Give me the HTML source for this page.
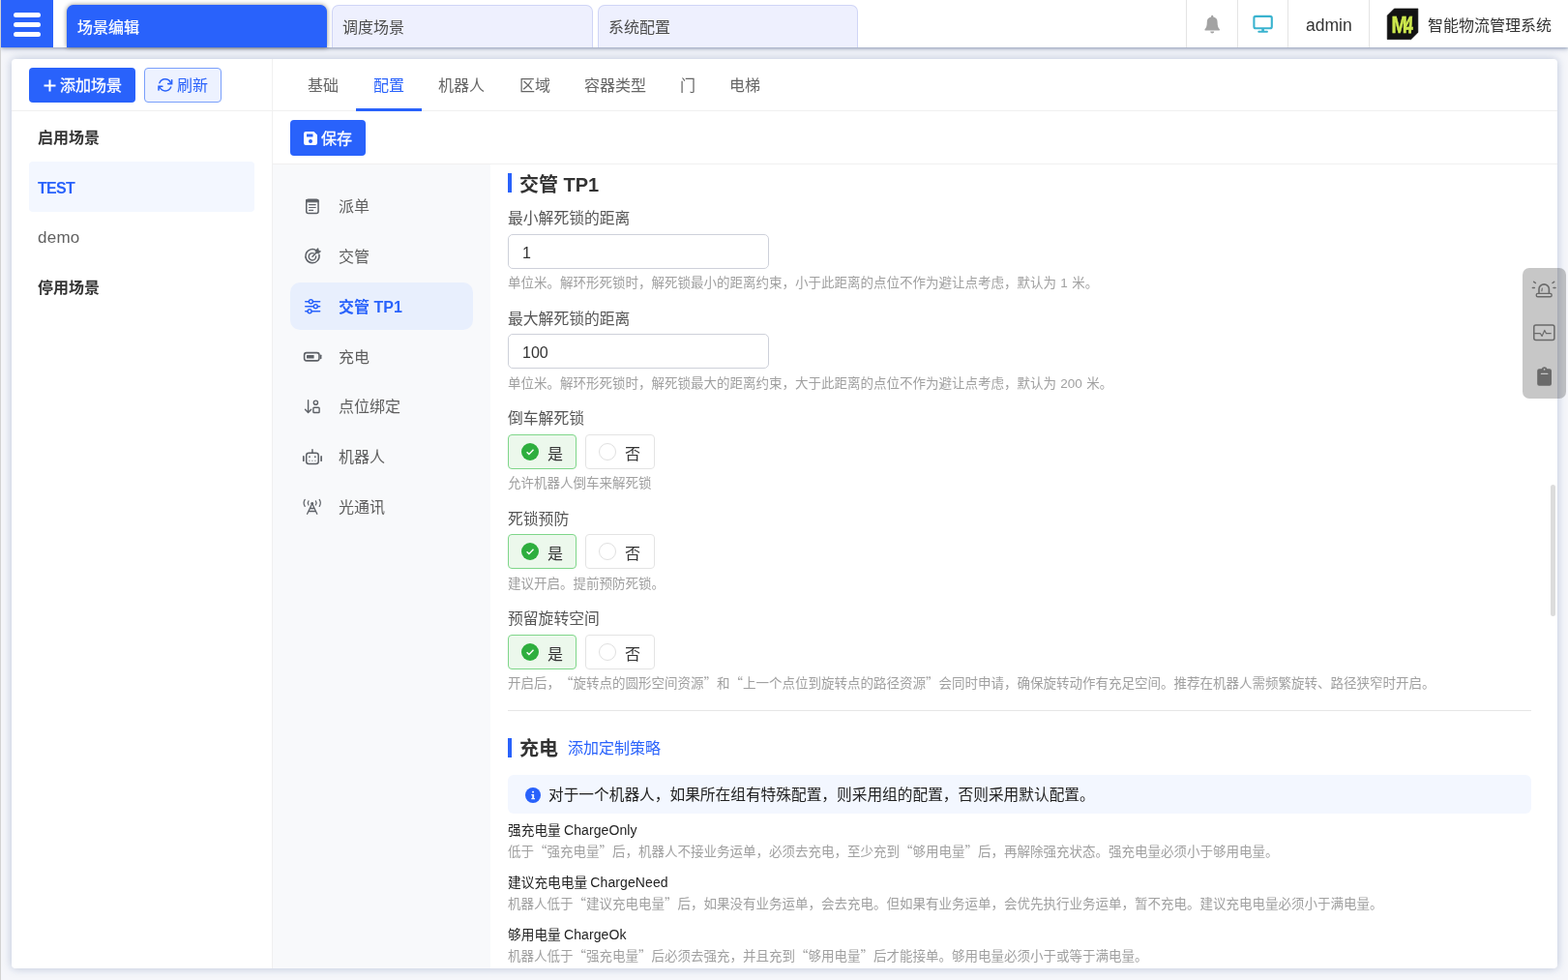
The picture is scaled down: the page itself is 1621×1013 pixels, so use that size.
<!DOCTYPE html>
<html lang="zh-CN">
<head>
<meta charset="utf-8">
<title>智能物流管理系统</title>
<style>
*{box-sizing:border-box;margin:0;padding:0}
html,body{width:1621px;height:1013px;overflow:hidden}
body{position:relative;background:#f5f6fa;font-family:"Liberation Sans","Noto Sans CJK SC",sans-serif;font-size:16px;color:#333;line-height:1;text-spacing-trim:space-all}
.abs{position:absolute}
.t{position:absolute;white-space:nowrap;line-height:24px;height:24px}
.b{font-weight:bold}
svg{position:absolute;overflow:visible}
#edge{left:0;top:0;width:1px;height:1013px;background:#d2d2d2}
#hdr{left:1px;top:0;width:1620px;height:49px;background:#fff;box-shadow:0 1px 3px rgba(50,75,115,.42),0 2px 6px rgba(80,105,150,.25)}
#burger{left:0;top:0;width:54px;height:49px;background:#2962fb}
#burger i{position:absolute;left:13px;width:28px;height:5px;border-radius:2.5px;background:#fff}
.tab{position:absolute;top:5px;height:44px;width:270px;border-radius:7px 7px 0 0;background:#eef0fe;border:1px solid #d0d5f6;border-bottom:none;color:#4c4c4c;font-size:16px;line-height:45px;padding-left:10px}
.tab.on{background:#2962fb;border-color:#2962fb;color:#fff;-webkit-text-stroke:.25px #fff;box-shadow:0 0 5px rgba(0,0,0,.45)}
.vsep{position:absolute;top:0;width:1px;height:49px;background:#e4e4e4}
#card{left:12px;top:61px;width:1598px;height:940px;background:#fff;border-radius:4px;box-shadow:0 0 10px rgba(88,112,160,.38)}
.btn{position:absolute;height:36px;border-radius:4px;background:#2962fb;color:#fff}
.btn.ol{background:#edf2ff;border:1px solid #7aa0fb;color:#2962fb}
.hl{position:absolute;height:1px;background:#f0f0f0}
.vl{position:absolute;width:1px;background:#f0f0f0}
.nav{color:#666}
.sub{color:#5e5e5e}
.lab{color:#555;font-size:15.8px}
.hint{color:#a0a0a0;font-size:13.5px;word-spacing:.6px}
.c14{color:#222;font-size:13.7px}
.la{font-size:14px;letter-spacing:.1px;margin-left:-.6px}
.inp{position:absolute;left:525px;width:270px;height:36px;border:1px solid #ced1da;border-radius:5px;background:#fff}
.rb{position:absolute;width:71px;height:36px;border:1px solid #e3e3e3;border-radius:4px;background:#fff}
.rb.on{border-color:#7fd68a;background:#ecf8ec}
.rb .dot{position:absolute;left:13px;top:8px;width:18px;height:18px;border-radius:50%;border:1px solid #e0e0e0;background:#fff}
.rb.on .dot{border:none;background:#2eae3e}
.rb .tx{position:absolute;left:40px;top:8px;line-height:24px;color:#333;font-size:16px}
.q{font-family:"Noto Sans CJK SC","Liberation Sans",sans-serif}
.bar{position:absolute;left:525px;width:4px;height:20px;background:#2962fb}
</style>
</head>
<body>
<div id="all" style="position:absolute;left:0;top:0;width:1621px;height:1013px;will-change:transform">
<div id="card" class="abs"></div>
<div class="btn" style="left:30px;top:70px;width:110px"></div>
<svg style="left:45px;top:82px" width="13" height="13" viewBox="0 0 13 13"><path d="M6.5 0.5v12M0.5 6.5h12" stroke="#fff" stroke-width="2" fill="none"/></svg>
<div class="t " style="left:62px;top:77px;color:#fff;-webkit-text-stroke:.3px #fff">添加场景</div>
<div class="btn ol" style="left:149px;top:70px;width:80px"></div>
<svg style="left:160px;top:78px" width="22" height="20" viewBox="160 78 22 20" fill="none" stroke="#2962fb" stroke-width="1.500" stroke-linecap="round" stroke-linejoin="round"><path d="M164.900 85.700A6.300 6.300 0 0 1 176.400 85.400"/><path d="M176.700 90A6.300 6.300 0 0 1 165.200 90.300"/><path d="M177.600 82.700v3.900h-3.900M164 93.100v-3.900h3.900" stroke-width="1.600" stroke-linejoin="miter"/></svg>
<div class="t " style="left:183px;top:77px;color:#2962fb">刷新</div>
<div class="hl" style="left:12px;top:114px;width:1598px"></div>
<div class="vl" style="left:281px;top:61px;height:940px"></div>
<div class="t b" style="left:39px;top:131px;color:#333">启用场景</div>
<div class="abs" style="left:30px;top:167px;width:233px;height:52px;border-radius:4px;background:#f3f7ff"></div>
<div class="t b" style="left:39px;top:183px;color:#2962fb;letter-spacing:-.7px">TEST</div>
<div class="t " style="left:39px;top:234px;color:#616161;font-size:17px;letter-spacing:.25px">demo</div>
<div class="t b" style="left:39px;top:286px;color:#333">停用场景</div>
<div class="t nav" style="left:318px;top:77px;">基础</div>
<div class="t nav" style="left:453px;top:77px;">机器人</div>
<div class="t nav" style="left:537px;top:77px;">区域</div>
<div class="t nav" style="left:604px;top:77px;">容器类型</div>
<div class="t nav" style="left:703px;top:77px;">门</div>
<div class="t nav" style="left:754px;top:77px;">电梯</div>
<div class="t " style="left:386px;top:77px;color:#2962fb">配置</div>
<div class="abs" style="left:368px;top:112px;width:68px;height:3px;background:#2962fb"></div>
<div class="btn" style="left:300px;top:124px;width:78px;height:37px"></div>
<svg style="left:314px;top:136px" width="14" height="14" viewBox="0 0 14 14"><path fill="#fff" d="M2.2 0h8.3L14 3.5v8.3A2.2 2.2 0 0 1 11.8 14H2.2A2.2 2.2 0 0 1 0 11.800V2.2A2.2 2.2 0 0 1 2.2 0zM3 2.500v3h6.500v-3zM7 8a2 2 0 1 0 0 4a2 2 0 0 0 0-4z" fill-rule="evenodd"/></svg>
<div class="t " style="left:332px;top:132px;color:#fff;-webkit-text-stroke:.3px #fff">保存</div>
<div class="hl" style="left:282px;top:169px;width:1328px"></div>
<div class="abs" style="left:282px;top:170px;width:225px;height:831px;background:#f8f9fb;border-radius:0"></div>
<div class="abs" style="left:300px;top:292px;width:189px;height:49px;border-radius:10px;background:#e8effd"></div>
<div class="t sub" style="left:350px;top:202px;">派单</div>
<div class="t sub" style="left:350px;top:254px;">交管</div>
<div class="t b" style="left:350px;top:306px;color:#2962fb">交管 TP1</div>
<div class="t sub" style="left:350px;top:358px;">充电</div>
<div class="t sub" style="left:350px;top:409px;">点位绑定</div>
<div class="t sub" style="left:350px;top:461px;">机器人</div>
<div class="t sub" style="left:350px;top:513px;">光通讯</div>
<svg style="left:310px;top:200px" width="26" height="340" viewBox="310 200 26 340" fill="none" stroke="#5d6167" stroke-width="1.5" stroke-linecap="round" stroke-linejoin="round">
<g><rect x="316.750" y="206.200" width="12.300" height="14.300" rx="2"/><path d="M317 206.500h12v2.300h-12z" fill="#5d6167" stroke-width="1"/><path d="M319.600 211.600h6.600M319.600 214.500h6.600M319.600 217.400h4" stroke-width="1.200"/></g>
<g><path d="M327.300 259.100A7.100 7.100 0 1 0 329.900 263.200"/><path d="M324.600 262A3.700 3.700 0 1 0 326.600 264.900" stroke-width="1.400"/><path d="M323 265.200l4-4" stroke-width="1.500"/><path d="M326.300 258.700l2.600-2.200 .5 2.600 2.300 .7-2.400 2.200-2.700-.4z" fill="#5d6167" stroke-width=".6"/></g>
<g stroke="#2962fb" stroke-width="1.400"><path d="M315.700 311.700h3.600M323.400 311.700h7.300M315.700 316.800h8.500M328.300 316.800h2.400M315.700 321.800h2.300M322.100 321.800h8.600"/><circle cx="321.400" cy="311.700" r="2"/><circle cx="326.300" cy="316.800" r="2"/><circle cx="320.100" cy="321.800" r="2"/></g>
<g><rect x="314.600" y="364.600" width="15.400" height="8.300" rx="2.300" stroke-width="1.600"/><rect x="317" y="367" width="7.600" height="3.500" rx=".5" fill="#5d6167" stroke="none"/><path d="M331.700 367.200v3.200" stroke-width="1.500"/></g>
<g stroke-width="1.400"><path d="M318.600 413.800v12.600M315.500 423.300l3.100 3.300 3.100-3.300"/><circle cx="326.400" cy="416.200" r="2.100"/><rect x="323.900" y="421.200" width="6.200" height="5.300" rx=".8"/></g>
<g stroke-width="1.500"><rect x="316.700" y="468.200" width="12.500" height="11.200" rx="2.500"/><path d="M322.950 464.800v3.200"/><path d="M313.800 471.800v4.400M332.100 471.800v4.400" stroke-width="1.700"/><path d="M320 472v.3M325.800 472v.3" stroke-width="1.700"/><path d="M319.400 476.300h1M322.400 476.300h1M325.400 476.300h1" stroke-width="1.100" stroke-linecap="butt"/></g>
<g stroke-width="1.300"><path d="M322.700 520.500l-5.100 10.700M322.700 520.500l5.100 10.700M320.300 525.500h4.800M318.900 528.500h7.600"/><circle cx="322.700" cy="520.200" r="1.300" fill="#5d6167" stroke="none"/><path d="M319 517.800a3.600 3.600 0 0 0 0 4.200M326.400 517.800a3.600 3.600 0 0 1 0 4.200" stroke-width="1.200"/><path d="M315.200 516.400a6.500 6.500 0 0 0 0 7M330.200 516.400a6.500 6.500 0 0 1 0 7" stroke-width="1.200"/></g>
</svg>

<div class="bar" style="top:179px"></div>
<div class="t b" style="left:537px;top:179px;font-size:20px;color:#333">交管 TP1</div>
<div class="t lab" style="left:525px;top:214px;">最小解死锁的距离</div>
<div class="inp" style="top:242px"></div>
<div class="t " style="left:540px;top:250px;color:#333">1</div>
<div class="t hint" style="left:525px;top:281px;">单位米。解环形死锁时，解死锁最小的距离约束，小于此距离的点位不作为避让点考虑，默认为 1 米。</div>
<div class="t lab" style="left:525px;top:318px;">最大解死锁的距离</div>
<div class="inp" style="top:345px"></div>
<div class="t " style="left:540px;top:353px;color:#333">100</div>
<div class="t hint" style="left:525px;top:385px;">单位米。解环形死锁时，解死锁最大的距离约束，大于此距离的点位不作为避让点考虑，默认为 200 米。</div>
<div class="t lab" style="left:525px;top:421px;">倒车解死锁</div>
<div class="rb on" style="left:525px;top:449px"><div class="dot"></div><svg style="left:17px;top:13px" width="10" height="8" viewBox="0 0 10 8"><path d="M1.600 4.300l2.300 2.200L8.500 1.800" fill="none" stroke="#fff" stroke-width="1.400"/></svg><div class="tx">是</div></div>
<div class="rb" style="left:605px;top:449px;width:72px"><div class="dot"></div><div class="tx">否</div></div>
<div class="t hint" style="left:525px;top:488px;">允许机器人倒车来解死锁</div>
<div class="t lab" style="left:525px;top:525px;">死锁预防</div>
<div class="rb on" style="left:525px;top:552px"><div class="dot"></div><svg style="left:17px;top:13px" width="10" height="8" viewBox="0 0 10 8"><path d="M1.600 4.300l2.300 2.200L8.500 1.800" fill="none" stroke="#fff" stroke-width="1.400"/></svg><div class="tx">是</div></div>
<div class="rb" style="left:605px;top:552px;width:72px"><div class="dot"></div><div class="tx">否</div></div>
<div class="t hint" style="left:525px;top:592px;">建议开启。提前预防死锁。</div>
<div class="t lab" style="left:525px;top:628px;">预留旋转空间</div>
<div class="rb on" style="left:525px;top:656px"><div class="dot"></div><svg style="left:17px;top:13px" width="10" height="8" viewBox="0 0 10 8"><path d="M1.600 4.300l2.300 2.200L8.500 1.800" fill="none" stroke="#fff" stroke-width="1.400"/></svg><div class="tx">是</div></div>
<div class="rb" style="left:605px;top:656px;width:72px"><div class="dot"></div><div class="tx">否</div></div>
<div class="t hint" style="left:525px;top:693px;">开启后，<span class="q">“</span>旋转点的圆形空间资源<span class="q">”</span>和<span class="q">“</span>上一个点位到旋转点的路径资源<span class="q">”</span>会同时申请，确保旋转动作有充足空间。推荐在机器人需频繁旋转、路径狭窄时开启。</div>
<div class="hl" style="left:525px;top:734px;width:1058px;background:#e6e6e6"></div>
<div class="bar" style="top:763px"></div>
<div class="t b" style="left:537px;top:762px;font-size:20px;color:#333">充电</div>
<div class="t " style="left:587px;top:762px;color:#2962fb">添加定制策略</div>
<div class="abs" style="left:525px;top:801px;width:1058px;height:40px;border-radius:6px;background:#f3f7ff"></div>
<svg style="left:543px;top:814px" width="16" height="16" viewBox="0 0 16 16"><circle cx="8" cy="8" r="8" fill="#2962fb"/><rect x="7.100" y="3.700" width="1.900" height="1.900" rx=".4" fill="#fff" opacity=".92"/><path d="M6.300 7h2.800v4h.9v1.200H6.300V11h.9V8.200h-.9z" fill="#fff" opacity=".92"/></svg>
<div class="t " style="left:567px;top:810px;font-size:15.7px;color:#222">对于一个机器人，如果所在组有特殊配置，则采用组的配置，否则采用默认配置。</div>
<div class="t c14" style="left:525px;top:846px;">强充电量 <span class="la">ChargeOnly</span></div>
<div class="t hint" style="left:525px;top:867px;">低于<span class="q">“</span>强充电量<span class="q">”</span>后，机器人不接业务运单，必须去充电，至少充到<span class="q">“</span>够用电量<span class="q">”</span>后，再解除强充状态。强充电量必须小于够用电量。</div>
<div class="t c14" style="left:525px;top:900px;">建议充电电量 <span class="la">ChargeNeed</span></div>
<div class="t hint" style="left:525px;top:921px;">机器人低于<span class="q">“</span>建议充电电量<span class="q">”</span>后，如果没有业务运单，会去充电。但如果有业务运单，会优先执行业务运单，暂不充电。建议充电电量必须小于满电量。</div>
<div class="t c14" style="left:525px;top:954px;">够用电量 <span class="la">ChargeOk</span></div>
<div class="t hint" style="left:525px;top:975px;">机器人低于<span class="q">“</span>强充电量<span class="q">”</span>后必须去强充，并且充到<span class="q">“</span>够用电量<span class="q">”</span>后才能接单。够用电量必须小于或等于满电量。</div>
<div class="abs" style="left:1603px;top:501px;width:5px;height:136px;border-radius:2.5px;background:#dcdcdc"></div>
<div class="abs" style="left:1574px;top:277px;width:45px;height:135px;border-radius:7px;background:rgba(0,0,0,.22)"></div>
<svg style="left:1580px;top:285px" width="34" height="120" viewBox="1580 285 34 120" fill="none" stroke="#6a6a6a" stroke-width="1.400" stroke-linecap="round" stroke-linejoin="round">
<g><rect x="1588.300" y="303.400" width="15.800" height="3.400" rx="1.400"/><path d="M1591 303.300v-4.600a5.200 4.800 0 0 1 10.400 0v4.600" stroke-width="1.600"/><path d="M1593.900 300.800l.4-2.800" stroke-width="1.100"/><path d="M1584.400 297.400h2M1606 297.400h2M1585.700 291.300l1.700 1.200M1606.700 291.300l-1.700 1.200" stroke-width="1.500"/></g>
<g><rect x="1585.800" y="335.900" width="21.100" height="15.700" rx="2" stroke-width="1.500"/><path d="M1586.600 344.700h5.800l1.700 2.700 2.700-6 1.700 3.300h4.700" stroke-width="1.200"/></g>
<g><path d="M1591.200 381.300h2.600a2.900 2.900 0 0 1 5.600 0h2.600a2 2 0 0 1 2 2v13.500a2 2 0 0 1-2 2h-10.800a2 2 0 0 1-2-2v-13.500a2 2 0 0 1 2-2z" fill="#6a6a6a" stroke="none"/><circle cx="1596.600" cy="381.800" r=".9" fill="#c7c7c7" stroke="none"/><path d="M1593.400 386.400h6.400" stroke="#c7c7c7" stroke-width="1.300"/></g>
</svg>

<div id="hdr" class="abs">
<div id="burger" class="abs"><i style="top:12.5px"></i><i style="top:22.5px"></i><i style="top:32.5px"></i></div>
<div class="tab on" style="left:68px;width:269px">场景编辑</div>
<div class="tab" style="left:342px">调度场景</div>
<div class="tab" style="left:617px;width:269px">系统配置</div>
<div class="vsep" style="left:1225px"></div>
<div class="vsep" style="left:1278px"></div>
<div class="vsep" style="left:1330px"></div>
<div class="vsep" style="left:1414px"></div>
<svg style="left:1242px;top:14px" width="20" height="22" viewBox="1244 14 20 22"><path d="M1254.200 15.800a1.100 1.100 0 0 1 1.100 1.100v.7a5.400 5.400 0 0 1 4.300 5.300c0 3.600 .8 5.700 2.100 7.100c.6 .6 .2 1.600-.7 1.600h-13.600c-.9 0-1.300-1-.7-1.600c1.300-1.400 2.100-3.500 2.100-7.100a5.400 5.400 0 0 1 4.300-5.300v-.7a1.100 1.100 0 0 1 1.100-1.100zM1252.200 32.400h4a2 2 0 0 1-4 0z" fill="#a3a3a3"/></svg>
<svg style="left:1293px;top:14px" width="24" height="22" viewBox="1294 14 24 22" fill="none" stroke="#3ab3cf" stroke-linecap="round" stroke-linejoin="round"><rect x="1296.400" y="16.900" width="18.400" height="12.300" rx="1.800" stroke-width="2.100"/><path d="M1305.600 29.500v3" stroke-width="2.600" stroke-linecap="butt"/><path d="M1301.200 32.800h8.800" stroke-width="1.900"/></svg>
<svg style="left:1433px;top:8px" width="34" height="34" viewBox="1434 8 34 34"><path d="M1441.400 8.900h24.500v24.600l-7.200 7.200h-24.500v-24.600z" fill="#131313" stroke="#131313" stroke-width=".6" stroke-linejoin="round"/><text transform="translate(1438.400 33.800) scale(.8 1)" stroke="#cde84d" stroke-width=".500" font-family="'Liberation Sans',sans-serif" font-weight="bold" font-size="24.500" fill="#cde84d">M</text><text transform="translate(1451 33.800) scale(.68 1) skewX(-6)" stroke="#cde84d" stroke-width=".800" font-family="'Liberation Sans',sans-serif" font-weight="bold" font-size="24.500" fill="#cde84d">4</text></svg>

<div class="t" style="left:1349px;top:14px;font-size:17.5px;color:#333">admin</div>
<div class="t" style="left:1475px;top:15px;color:#333">智能物流管理系统</div>
</div>
<div id="edge" class="abs"></div>
</div>
</body>
</html>
